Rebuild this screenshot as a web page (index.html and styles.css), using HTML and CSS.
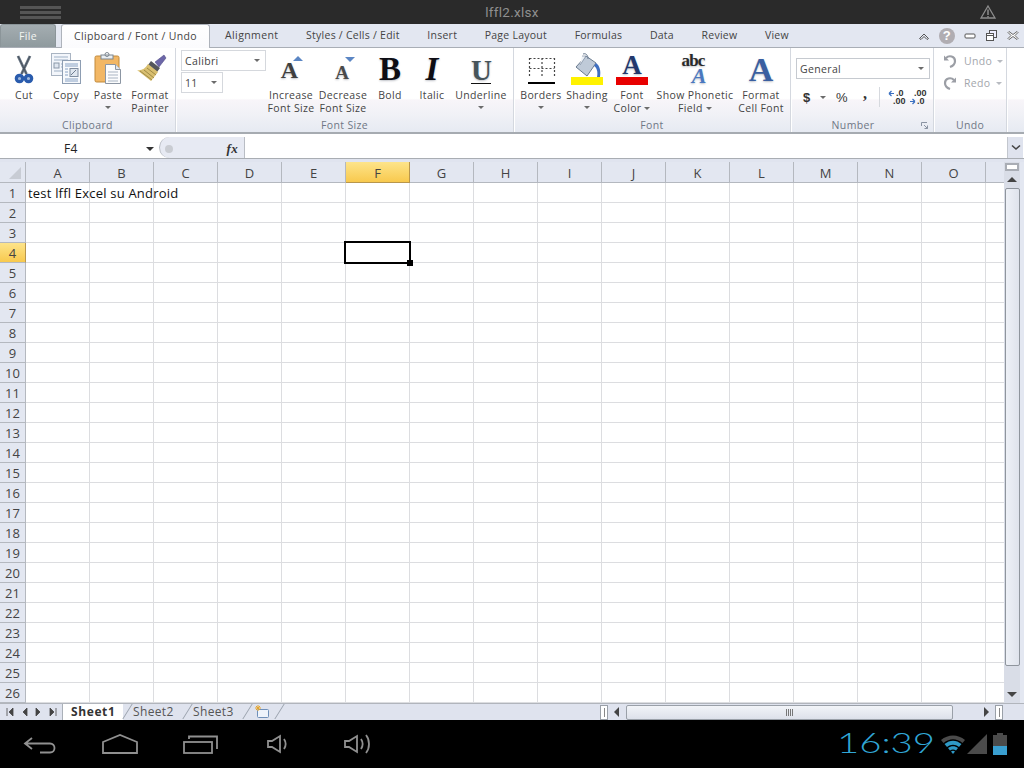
FILE: index.html
```html
<!DOCTYPE html>
<html lang="en">
<head>
<meta charset="utf-8">
<title>lffl2.xlsx</title>
<link rel="stylesheet" href="styles.css">
</head>
<body>
<div class="app">
  <header class="titlebar">
    <div class="grip"><i></i><i></i><i></i></div>
    <div class="doc-title">lffl2.xlsx</div>
    <svg class="warn" width="16" height="14" viewBox="0 0 16 14"><path d="M8 1 15 13H1Z" fill="none" stroke="#8d8d8d" stroke-width="1.3"/><path d="M8 4.500V10M8 11v1.500" stroke="#8d8d8d" stroke-width="1.500"/></svg>
  </header>

  <nav class="tabs">
    <div class="tab-file">File</div>
    <div class="tab tab-active">Clipboard / Font / Undo</div>
    <div class="tab">Alignment</div>
    <div class="tab">Styles / Cells / Edit</div>
    <div class="tab">Insert</div>
    <div class="tab">Page Layout</div>
    <div class="tab">Formulas</div>
    <div class="tab">Data</div>
    <div class="tab">Review</div>
    <div class="tab">View</div>
    <div class="win-ctrls">
      <svg width="12" height="10" viewBox="0 0 12 10"><path d="M1.500 7.500 6 3l4.500 4.500-1.500 1L6 5.500l-3 3Z" fill="none" stroke="#555" stroke-width="1"/></svg>
      <span class="help">?</span>
      <svg width="12" height="8" viewBox="0 0 12 8"><rect x="1" y="2" width="10" height="4" rx="1" fill="#fff" stroke="#555"/></svg>
      <svg width="13" height="13" viewBox="0 0 13 13"><rect x="4.500" y="1.500" width="7" height="7" fill="#eef" stroke="#555"/><rect x="1.500" y="4.500" width="7" height="7" fill="#fff" stroke="#555"/><path d="M2 6.500h6" stroke="#555"/></svg>
      <svg width="12" height="11" viewBox="0 0 12 11"><path d="M2 1.500 6 4.500l4-3 1 1-3 3 3 3-1 1-4-3-4 3-1-1 3-3-3-3Z" fill="#fff" stroke="#666"/></svg>
    </div>
  </nav>

  <section class="ribbon">
    <div class="group g-clip">
      <div class="group-body">
        <div class="btn w42">
          <svg class="ico" width="32" height="34" viewBox="0 0 32 34">
            <path d="M10 4 18.500 22M22 4 13.500 22" stroke="#6b7785" stroke-width="2.800"/>
            <path d="M10 4 18.500 22M22 4 13.500 22" stroke="#3d4753" stroke-width=".8"/>
            <circle cx="11.500" cy="26.500" r="3.200" fill="#9db7dc" stroke="#2a5cad" stroke-width="3.200"/>
            <circle cx="20.500" cy="26.500" r="3.200" fill="#9db7dc" stroke="#2a5cad" stroke-width="3.200"/>
          </svg>
          <div class="lbl">Cut</div>
        </div>
        <div class="btn w42">
          <svg class="ico" width="34" height="34" viewBox="0 0 34 34">
            <rect x="2.500" y="1.500" width="19" height="22" fill="#f3f6fb" stroke="#a9b4c2"/>
            <path d="M5 5h14M5 8h14M12 12h7M12 15h7M5 19h14" stroke="#9fb1c6"/>
            <rect x="5" y="11" width="5" height="5" fill="#dfe6ef" stroke="#8a97a8"/>
            <rect x="13.500" y="8.500" width="18" height="23" fill="#f7f9fc" stroke="#8d9db2"/>
            <path d="M16 12h13M16 14h13M16 27h13M16 29h13" stroke="#88a2c4"/>
            <rect x="21" y="16.500" width="8" height="8" fill="#dfe6ef" stroke="#7f8da0"/>
            <path d="M22 23 27 18" stroke="#6f7d90"/>
            <path d="M16 17h3M16 20h3M16 23h3" stroke="#88a2c4"/>
          </svg>
          <div class="lbl">Copy</div>
        </div>
        <div class="btn w42">
          <svg class="ico" width="32" height="34" viewBox="0 0 32 34">
            <rect x="3" y="4" width="24" height="26" rx="1.500" fill="#f2b765" stroke="#c18a3c"/>
            <rect x="9" y="3" width="12" height="4" fill="#e9eef2" stroke="#7d8791"/>
            <circle cx="15" cy="2.500" r="2" fill="none" stroke="#7d8791"/>
            <path d="M13.500 12.500h10l5 5v14h-15Z" fill="#fbfcfd" stroke="#8c96a3"/>
            <path d="M23.500 12.500v5h5" fill="#e2e7ee" stroke="#8c96a3"/>
            <path d="M16 20h10M16 23h10M16 26h10M16 29h10" stroke="#a9b4c2"/>
          </svg>
          <div class="lbl">Paste</div>
          <i class="caret"></i>
        </div>
        <div class="btn w42">
          <svg class="ico" width="32" height="34" viewBox="0 0 32 34">
            <path d="M21 10 30 3l2 3-7 9Z" fill="#6c66a8" stroke="#47427d" stroke-width=".5"/>
            <path d="M17 9 26 16l-3 4-9-7Z" fill="#54565c"/>
            <path d="M14 12 24 20 17 29 3 18C7 19 11 17 14 12Z" fill="#d9bf70"/>
            <path d="M6 19 18 28M10 18l10 8M13 16l9 7" stroke="#9f8a46"/>
          </svg>
          <div class="lbl">Format<br>Painter</div>
        </div>
      </div>
      <div class="group-label">Clipboard</div>
    </div>

    <div class="group g-size">
      <div class="group-body">
        <div class="combos">
          <div class="combo c-font"><span>Calibri</span><i class="caret"></i></div>
          <div class="combo c-num"><span>11</span><i class="caret"></i></div>
        </div>
        <div class="btn w-inc">
          <div class="gl gl-inc"><span>A</span><i class="tri tri-up"></i></div>
          <div class="lbl">Increase<br>Font Size</div>
        </div>
        <div class="btn w-dec">
          <div class="gl gl-dec"><span>A</span><i class="tri tri-down"></i></div>
          <div class="lbl">Decrease<br>Font Size</div>
        </div>
        <div class="btn w-bold">
          <div class="gl gl-b">B</div>
          <div class="lbl">Bold</div>
        </div>
        <div class="btn w-ital">
          <div class="gl gl-i">I</div>
          <div class="lbl">Italic</div>
        </div>
        <div class="btn w-und">
          <div class="gl gl-u"><span>U</span></div>
          <div class="lbl">Underline</div>
          <i class="caret"></i>
        </div>
      </div>
      <div class="group-label">Font Size</div>
    </div>

    <div class="group g-font">
      <div class="group-body">
        <div class="btn w-bor">
          <svg class="ico" width="30" height="34" viewBox="0 0 30 34">
            <path d="M3.500 6.500h25M3.500 16.500h25M3.500 6v20M16 6v20M28.500 6v20" stroke="#444" stroke-width="1.200" stroke-dasharray="2 2" fill="none"/>
            <path d="M2 31h27" stroke="#000" stroke-width="2"/>
          </svg>
          <div class="lbl">Borders</div>
          <i class="caret"></i>
        </div>
        <div class="btn w-sha">
          <svg class="ico" width="34" height="34" viewBox="0 0 34 34">
            <path d="M16 4 6 15l11 9 9-13Z" fill="#bfcad8" stroke="#6a7b90"/>
            <path d="M10 13 16 4l-4 0" fill="#eef2f7" stroke="#6a7b90" stroke-width=".6"/>
            <path d="M26 11c4 3 5 8 4 14h-3c1-5 0-9-3-11Z" fill="#3f6fc0"/>
            <path d="M13 2c3-1 5 1 5 5" fill="none" stroke="#6a7b90"/>
            <rect x="1" y="25" width="32" height="8" fill="#fff200"/>
          </svg>
          <div class="lbl">Shading</div>
          <i class="caret"></i>
        </div>
        <div class="btn w-col">
          <div class="gl gl-col"><span>A</span><div class="bar"></div></div>
          <div class="lbl">Font<br><span class="cap-inline">Color<i class="caret"></i></span></div>
        </div>
        <div class="btn w-pho">
          <div class="gl gl-pho"><span class="g-abc">abc</span><span class="g-aph">A</span></div>
          <div class="lbl">Show Phonetic<br><span class="cap-inline">Field<i class="caret"></i></span></div>
        </div>
        <div class="btn w-cel">
          <div class="gl gl-cel">A</div>
          <div class="lbl">Format<br>Cell Font</div>
        </div>
      </div>
      <div class="group-label">Font</div>
    </div>

    <div class="group g-num">
      <div class="group-body col">
        <div class="combo c-gen"><span>General</span><i class="caret"></i></div>
        <div class="num-row">
          <span class="n-sym n-d">$</span><i class="caret"></i>
          <span class="n-sym n-p">%</span>
          <span class="n-sym n-c">,</span>
          <span class="n-sep"></span>
          <div class="dec"><svg width="7" height="7" viewBox="0 0 7 7"><path d="M1 3.500h5M1 3.500l2.500-2.500M1 3.500 3.500 6" stroke="#3a6fc0" stroke-width="1.200" fill="none"/></svg><span class="d1">.0</span><span class="d2">.00</span></div>
          <div class="dec dec2"><span class="d3">.00</span><span class="d4">.0</span><svg width="7" height="7" viewBox="0 0 7 7"><path d="M1 3.500h5M6 3.500 3.500 1M6 3.500 3.500 6" stroke="#3a6fc0" stroke-width="1.200" fill="none"/></svg></div>
        </div>
      </div>
      <div class="group-label launch-row"><span>Number</span>
        <svg class="launcher" width="7" height="7" viewBox="0 0 7 7"><path d="M.5 4V.5H6M3 3 6.500 6.500M6.500 3.500v3h-3" fill="none" stroke="#8b94a3"/></svg>
      </div>
    </div>

    <div class="group g-undo">
      <div class="group-body col undo-col">
        <div class="undo-item">
          <svg width="14" height="14" viewBox="0 0 14 14"><path d="M1 1.500v5h5Z" fill="#9b9ea5"/><path d="M3 4c3-3 9-2 9 3 0 3-2 5-5 6" fill="none" stroke="#9b9ea5" stroke-width="2.200"/></svg>
          <span>Undo</span><i class="caret pale"></i>
        </div>
        <div class="undo-item">
          <svg width="14" height="14" viewBox="0 0 14 14"><path d="M13 1.500v5H8Z" fill="#9b9ea5"/><path d="M11 4C8 1 2 2 2 7c0 3 2 5 5 6" fill="none" stroke="#9b9ea5" stroke-width="2.200"/></svg>
          <span>Redo</span><i class="caret pale"></i>
        </div>
      </div>
      <div class="group-label">Undo</div>
    </div>
    <div class="ribbon-rest"></div>
  </section>

  <div class="formula">
    <div class="namebox"><span>F4</span><i class="caret dark"></i></div>
    <div class="pill"><i class="pill-dot"></i><span class="fx">fx</span></div>
    <div class="f-input"></div>
    <div class="f-drop"><svg width="10" height="7" viewBox="0 0 10 7"><path d="M1 1.500 5 5l4-3.500" fill="none" stroke="#444" stroke-width="1.600"/></svg></div>
  </div>
  <div class="band"></div>

  <div class="sheet-area">
    <div class="grid-wrap">
      <table class="grid">
        <thead>
          <tr><th class="corner"><i></i></th><th>A</th><th>B</th><th>C</th><th>D</th><th>E</th><th class="sel">F</th><th>G</th><th>H</th><th>I</th><th>J</th><th>K</th><th>L</th><th>M</th><th>N</th><th>O</th><th class="last"></th></tr>
        </thead>
        <tbody>
          <tr><th>1</th><td class="text">test lffl Excel su Android</td><td></td><td></td><td></td><td></td><td></td><td></td><td></td><td></td><td></td><td></td><td></td><td></td><td></td><td></td><td class="last"></td></tr>
          <tr><th>2</th><td></td><td></td><td></td><td></td><td></td><td></td><td></td><td></td><td></td><td></td><td></td><td></td><td></td><td></td><td></td><td class="last"></td></tr>
          <tr><th>3</th><td></td><td></td><td></td><td></td><td></td><td></td><td></td><td></td><td></td><td></td><td></td><td></td><td></td><td></td><td></td><td class="last"></td></tr>
          <tr><th class="sel">4</th><td></td><td></td><td></td><td></td><td></td><td class="cursor"><span class="cursor-box"></span></td><td></td><td></td><td></td><td></td><td></td><td></td><td></td><td></td><td></td><td class="last"></td></tr>
          <tr><th>5</th><td></td><td></td><td></td><td></td><td></td><td></td><td></td><td></td><td></td><td></td><td></td><td></td><td></td><td></td><td></td><td class="last"></td></tr>
          <tr><th>6</th><td></td><td></td><td></td><td></td><td></td><td></td><td></td><td></td><td></td><td></td><td></td><td></td><td></td><td></td><td></td><td class="last"></td></tr>
          <tr><th>7</th><td></td><td></td><td></td><td></td><td></td><td></td><td></td><td></td><td></td><td></td><td></td><td></td><td></td><td></td><td></td><td class="last"></td></tr>
          <tr><th>8</th><td></td><td></td><td></td><td></td><td></td><td></td><td></td><td></td><td></td><td></td><td></td><td></td><td></td><td></td><td></td><td class="last"></td></tr>
          <tr><th>9</th><td></td><td></td><td></td><td></td><td></td><td></td><td></td><td></td><td></td><td></td><td></td><td></td><td></td><td></td><td></td><td class="last"></td></tr>
          <tr><th>10</th><td></td><td></td><td></td><td></td><td></td><td></td><td></td><td></td><td></td><td></td><td></td><td></td><td></td><td></td><td></td><td class="last"></td></tr>
          <tr><th>11</th><td></td><td></td><td></td><td></td><td></td><td></td><td></td><td></td><td></td><td></td><td></td><td></td><td></td><td></td><td></td><td class="last"></td></tr>
          <tr><th>12</th><td></td><td></td><td></td><td></td><td></td><td></td><td></td><td></td><td></td><td></td><td></td><td></td><td></td><td></td><td></td><td class="last"></td></tr>
          <tr><th>13</th><td></td><td></td><td></td><td></td><td></td><td></td><td></td><td></td><td></td><td></td><td></td><td></td><td></td><td></td><td></td><td class="last"></td></tr>
          <tr><th>14</th><td></td><td></td><td></td><td></td><td></td><td></td><td></td><td></td><td></td><td></td><td></td><td></td><td></td><td></td><td></td><td class="last"></td></tr>
          <tr><th>15</th><td></td><td></td><td></td><td></td><td></td><td></td><td></td><td></td><td></td><td></td><td></td><td></td><td></td><td></td><td></td><td class="last"></td></tr>
          <tr><th>16</th><td></td><td></td><td></td><td></td><td></td><td></td><td></td><td></td><td></td><td></td><td></td><td></td><td></td><td></td><td></td><td class="last"></td></tr>
          <tr><th>17</th><td></td><td></td><td></td><td></td><td></td><td></td><td></td><td></td><td></td><td></td><td></td><td></td><td></td><td></td><td></td><td class="last"></td></tr>
          <tr><th>18</th><td></td><td></td><td></td><td></td><td></td><td></td><td></td><td></td><td></td><td></td><td></td><td></td><td></td><td></td><td></td><td class="last"></td></tr>
          <tr><th>19</th><td></td><td></td><td></td><td></td><td></td><td></td><td></td><td></td><td></td><td></td><td></td><td></td><td></td><td></td><td></td><td class="last"></td></tr>
          <tr><th>20</th><td></td><td></td><td></td><td></td><td></td><td></td><td></td><td></td><td></td><td></td><td></td><td></td><td></td><td></td><td></td><td class="last"></td></tr>
          <tr><th>21</th><td></td><td></td><td></td><td></td><td></td><td></td><td></td><td></td><td></td><td></td><td></td><td></td><td></td><td></td><td></td><td class="last"></td></tr>
          <tr><th>22</th><td></td><td></td><td></td><td></td><td></td><td></td><td></td><td></td><td></td><td></td><td></td><td></td><td></td><td></td><td></td><td class="last"></td></tr>
          <tr><th>23</th><td></td><td></td><td></td><td></td><td></td><td></td><td></td><td></td><td></td><td></td><td></td><td></td><td></td><td></td><td></td><td class="last"></td></tr>
          <tr><th>24</th><td></td><td></td><td></td><td></td><td></td><td></td><td></td><td></td><td></td><td></td><td></td><td></td><td></td><td></td><td></td><td class="last"></td></tr>
          <tr><th>25</th><td></td><td></td><td></td><td></td><td></td><td></td><td></td><td></td><td></td><td></td><td></td><td></td><td></td><td></td><td></td><td class="last"></td></tr>
          <tr><th>26</th><td></td><td></td><td></td><td></td><td></td><td></td><td></td><td></td><td></td><td></td><td></td><td></td><td></td><td></td><td></td><td class="last"></td></tr>
        </tbody>
      </table>
    </div>
    <div class="vscroll">
      <div class="split-h"></div>
      <svg class="arr" width="14" height="8" viewBox="0 0 14 8"><path d="M2 7 7 2l5 5Z" fill="#444"/></svg>
      <div class="vthumb"></div>
      <svg class="arr" width="14" height="8" viewBox="0 0 14 8"><path d="M2 1 7 6l5-5Z" fill="#444"/></svg>
    </div>
    <div class="v-edge"></div>
  </div>

  <div class="sheetbar">
    <div class="nav">
      <svg width="62" height="14" viewBox="0 0 62 14"><path d="M7 3v8M13 3 9 7l4 4ZM27 3l-4 4 4 4ZM36 3l4 4-4 4ZM50 3l4 4-4 4ZM56 3v8" fill="#444" stroke="#444" stroke-width=".8"/></svg>
    </div>
    <div class="stab stab-on">Sheet1</div>
    <div class="stab">Sheet2</div>
    <div class="stab">Sheet3</div>
    <div class="stab stab-new">
      <svg width="16" height="14" viewBox="0 0 16 14"><rect x="3.500" y="4.500" width="11" height="8" rx="1" fill="#eef3fb" stroke="#6f8fb8"/><path d="M4 0v6M1 3h6M2 1l4 4M6 1 2 5" stroke="#e5a52c"/></svg>
    </div>
    <div class="h-spacer"></div>
    <div class="split-v"><i></i></div>
    <svg class="harr" width="10" height="12" viewBox="0 0 10 12"><path d="M7 1 2 6l5 5Z" fill="#444"/></svg>
    <div class="hthumb"><span class="grip-v"></span></div>
    <svg class="harr harr-r" width="10" height="12" viewBox="0 0 10 12"><path d="M3 1l5 5-5 5Z" fill="#444"/></svg>
    <div class="split-v"><i></i></div>
  </div>

  <footer class="sysbar">
    <div class="sys-nav">
      <svg class="n-back" width="34" height="18" viewBox="0 0 34 18"><path d="M9 2 2 7.500l7 5.500M2 7.500h25c6 0 6 9 0 9H17" fill="none" stroke="#909090" stroke-width="1.800"/></svg>
      <svg class="n-home" width="38" height="20" viewBox="0 0 38 20"><path d="M2 8 19 1l17 7v11H2Z" fill="none" stroke="#909090" stroke-width="1.800"/></svg>
      <svg class="n-rec" width="36" height="20" viewBox="0 0 36 20"><rect x="1" y="8" width="28" height="11" fill="none" stroke="#909090" stroke-width="1.800"/><path d="M6 5V2.500h28V15" fill="none" stroke="#909090" stroke-width="1.800"/></svg>
      <svg class="n-vol" width="22" height="20" viewBox="0 0 22 20"><path d="M1 7h4l8-5v16l-8-5H1Z" fill="none" stroke="#909090" stroke-width="1.800"/><path d="M17 5c2 3 2 7 0 10" fill="none" stroke="#909090" stroke-width="1.800"/></svg>
      <svg class="n-volp" width="28" height="24" viewBox="0 0 28 24"><path d="M1 9h4l8-5v16l-8-5H1Z" fill="none" stroke="#909090" stroke-width="1.800"/><path d="M17 7c2 3 2 7 0 10M22 3c4 5 4 13 0 18" fill="none" stroke="#909090" stroke-width="1.800"/></svg>
    </div>
    <div class="sys-status">
      <svg class="clock" width="100" height="24" viewBox="0 0 100 24"><text x="0" y="21" textLength="98" lengthAdjust="spacingAndGlyphs">16:39</text></svg>
      <svg class="s-wifi" width="26" height="20" viewBox="0 0 26 20">
        <path d="M1 5C8-1 18-1 25 5l-2.500 3C16 3 10 3 3.500 8Z" fill="#4b4b4b"/>
        <path d="M4.500 9C10 4.500 16 4.500 21.500 9l-2.500 3C15 9 11 9 7 12Z" fill="#2f9ac6"/>
        <path d="M8 13c3-2.500 7-2.500 10 0l-2 2.500c-2-1.500-4-1.500-6 0Z" fill="#2f9ac6"/>
        <path d="M11 16.500c1.300-1 2.700-1 4 0L13 19Z" fill="#2f9ac6"/>
      </svg>
      <svg class="s-sig" width="21" height="20" viewBox="0 0 21 20"><path d="M20 0v20H0Z" fill="#4b4b4b"/></svg>
      <svg class="s-bat" width="14" height="22" viewBox="0 0 14 22"><path d="M4 0h6v2h4v20H0V2h4Z" fill="#4b4b4b"/><rect y="13" width="14" height="9" fill="#3a9fd0"/></svg>
    </div>
  </footer>
</div>
</body>
</html>
```

FILE: styles.css
```css
* { box-sizing: border-box; }
html, body { margin: 0; padding: 0; }
body { width: 1024px; height: 768px; overflow: hidden; background: #fff; font-family: "Open Sans", "Liberation Sans", sans-serif; font-size: 10.500px; letter-spacing: .35px; color: #444; }
svg { overflow: visible; }
.app { display: flex; flex-direction: column; width: 1024px; height: 768px; }

.titlebar { height: 24px; flex: none; display: flex; align-items: center; position: relative; padding-left: 20px; background: #2a2a2a; }
.grip { display: flex; flex-direction: column; gap: 2px; width: 41px; }
.grip i { display: block; height: 3px; background: #555; }
.doc-title { position: absolute; left: 0; right: 0; text-align: center; font-family: Roboto, sans-serif; font-size: 13.500px; color: #8f8f8f; letter-spacing: .3px; }
.warn { margin-left: auto; margin-right: 28px; }

.tabs { height: 24px; flex: none; display: flex; background: #e3e7f1; border-bottom: 1px solid #a9aeb6; line-height: 23px; }
.tab-file { width: 56px; height: 23px; text-align: center; color: #f2f5f2; background: linear-gradient(#a4adb1, #8f9a9e); border: 1px solid #8b9599; border-bottom: none; border-radius: 3px 3px 0 0; }
.tab { padding: 0 13.800px; white-space: nowrap; letter-spacing: .25px; }
.tab:nth-child(3) { padding-left: 15px; letter-spacing: .4px; }
.tab-active { margin-left: 5px; width: 149px; padding: 0; text-align: center; height: 24px; letter-spacing: .35px; background: linear-gradient(#fff, #fbfbfd); border: 1px solid #aeb3bb; border-bottom: none; border-radius: 3px 3px 0 0; }
.win-ctrls { margin-left: auto; width: 110px; display: flex; align-items: center; justify-content: space-between; padding: 0 5px 0 4px; height: 23px; }
.help { width: 16px; height: 16px; border-radius: 50%; background: #b0adb2; color: #fff; font: bold 13px/16px "Liberation Sans", sans-serif; text-align: center; }

.ribbon { height: 86px; flex: none; display: flex; border-bottom: 2px solid #a6abb1; background: linear-gradient(#fff 0, #fff 60%, #f8f5f9 62%, #f0f1f6 80%, #e6eaf2 100%); }
.group { display: flex; flex-direction: column; border-right: 1px solid #d4d8df; box-shadow: 1px 0 0 #fff; }
.group-body { height: 71px; flex: none; display: flex; }
.group-body.col { flex-direction: column; }
.group-label { height: 13px; line-height: 13px; text-align: center; color: #6f7785; }
.g-clip { width: 176px; }
.g-clip .group-body { padding-left: 3px; }
.g-size { width: 338px; }
.g-size .group-body { padding-left: 5px; }
.g-font { width: 277px; }
.g-font .group-body { padding-left: 5px; }
.g-num { width: 143px; }
.g-num .group-body { padding-left: 5px; }
.g-undo { width: 73px; }
.ribbon-rest { flex: 1; }

.btn { display: flex; flex-direction: column; align-items: center; text-align: center; line-height: 13px; white-space: nowrap; }
.ico { height: 34px; margin-top: 4px; flex: none; }
.lbl { margin-top: 3px; }
.w42 { width: 42px; }
.w-inc { width: 48px; margin-left: 1px; }
.w-dec { width: 48px; margin-left: 4px; }
.w-bold { width: 42px; margin-left: 2px; }
.w-ital { width: 42px; }
.w-und { width: 54px; margin-left: 1px; }
.w-bor { width: 44px; margin-left: 0; }
.w-sha { width: 48px; }
.w-col { width: 42px; }
.w-pho { width: 84px; }
.w-cel { width: 48px; }

.gl { position: relative; width: 100%; height: 34px; margin-top: 4px; flex: none; display: block; text-align: center; font-family: "Liberation Serif", serif; font-weight: bold; letter-spacing: 0; color: #0d0d14; text-shadow: 0 1px 2px rgba(40, 50, 70, .3); }
.gl > span { display: block; }
.gl-inc { padding: 6px 3px 0 0; font-size: 24px; line-height: 24px; color: #3f3f3f; }
.gl-dec { padding: 11px 2px 0 0; font-size: 19px; line-height: 19px; color: #4a4a4a; }
.gl-b { padding-top: 1px; font-size: 33px; line-height: 33px; }
.gl-i { padding-top: 1px; font-size: 33px; line-height: 33px; font-style: italic; }
.gl-u { padding-top: 4px; font-size: 29px; line-height: 29px; color: #46545a; }
.gl-u span { width: 20px; height: 27px; margin: 0 auto; border-bottom: 1px solid #111; box-sizing: content-box; padding-bottom: 0; }
.gl-col { padding-top: 2px; font-size: 27px; line-height: 23px; color: #22386d; }
.gl-col .bar { width: 32px; height: 8px; margin: 0 auto; background: #e80000; }
.gl-pho .g-abc { padding-top: 1px; font-size: 17px; line-height: 15px; letter-spacing: -.8px; color: #2a2a2a; margin-right: 4px; }
.gl-pho .g-aph { font-size: 22px; line-height: 16px; font-style: italic; color: #4a78c0; margin-left: 8px; }
.gl-cel { padding-top: 1px; font-size: 34px; line-height: 33px; color: #3a5fa0; }
.tri { position: absolute; width: 0; height: 0; border-left: 5px solid transparent; border-right: 5px solid transparent; }
.tri-up { left: 26px; top: 4px; border-bottom: 5px solid #5b86c4; }
.tri-down { left: 26px; top: 5px; border-top: 5px solid #5b86c4; }

.caret { display: inline-block; width: 0; height: 0; border-left: 3px solid transparent; border-right: 3px solid transparent; border-top: 3px solid #6b6b6b; }
.btn > .caret { margin-top: 4px; }
.cap-inline { display: inline-flex; align-items: center; gap: 3px; }
.caret.pale { border-top-color: #b8bbc1; margin-left: 5px; }
.caret.dark { border-left-width: 4px; border-right-width: 4px; border-top: 4px solid #333; }

.combos { display: flex; flex-direction: column; gap: 1px; width: 85px; margin-top: 2px; }
.combo { display: flex; align-items: center; justify-content: space-between; height: 21px; padding: 0 5px 0 3px; background: #fff; border: 1px solid #d5d8dd; }
.c-font { width: 85px; }
.c-num { width: 42px; }
.c-gen { width: 134px; margin-top: 10px; border-color: #c6cad0; flex: none; }

.num-row { display: flex; align-items: center; height: 24px; margin-top: 6px; padding-left: 7px; }
.n-sym { font-family: "Liberation Sans", sans-serif; color: #333; }
.n-d { font-size: 13px; font-weight: bold; width: 17px; }
.n-p { font-size: 13px; margin-left: 10px; width: 17px; }
.n-c { font-family: "Liberation Serif", serif; font-size: 16px; font-weight: bold; margin-left: 10px; width: 14px; line-height: 12px; padding-bottom: 6px; }
.n-sep { width: 1px; height: 20px; background: #d6d9de; margin: 0 8px 0 2px; }
.dec { position: relative; width: 17px; height: 16px; margin-right: 4px; font: bold 9px/8px "Liberation Sans", sans-serif; color: #333; letter-spacing: 0; }
.dec svg { position: absolute; left: 0; top: 1px; }
.dec2 svg { top: 9px; }
.dec span { position: absolute; white-space: nowrap; }
.d1 { left: 8px; top: 0; }
.d2 { left: 5px; top: 8px; }
.d3 { left: 5px; top: 0; }
.d4 { left: 8px; top: 8px; }
.launch-row { position: relative; padding-right: 18px; }
.launcher { position: absolute; right: 5px; top: 3px; }

.undo-col { padding: 5px 0 0 9px; gap: 6px; }
.undo-item { display: flex; align-items: center; height: 16px; color: #a3a6ac; }
.undo-item span { margin-left: 7px; }

.formula { height: 25px; flex: none; display: flex; padding-top: 3px; background: #fff; border-bottom: 1px solid #a9adb3; }
.namebox { width: 159px; display: flex; align-items: center; padding: 2px 5px 0 64px; justify-content: space-between; font-size: 12px; color: #222; }
.pill { width: 86px; display: flex; align-items: center; justify-content: space-between; padding: 2px 6px 0 5px; background: #e7eaf3; border: 1px solid #b9bdc4; border-width: 0 1px 0 1px; border-radius: 11px 0 0 11px; }
.pill-dot { width: 8px; height: 8px; border-radius: 50%; background: #c9ccd2; }
.fx { font: italic bold 13px "Liberation Serif", serif; color: #333; }
.f-input { flex: 1; }
.f-drop { width: 16px; margin-right: 1px; display: flex; align-items: center; justify-content: center; background: #dfe3ee; border-left: 1px solid #c3c7ce; }
.band { height: 3px; flex: none; background: #e0e4ef; }

.sheet-area { height: 541px; flex: none; display: flex; overflow: hidden; }
.grid-wrap { width: 1004px; overflow: hidden; flex: none; }
.grid { border-collapse: separate; border-spacing: 0; table-layout: fixed; width: 1004px; font-size: 13px; letter-spacing: 0; }
.grid th, .grid td { padding: 0; width: 64px; height: 20px; border-right: 1px solid #dcdde0; border-bottom: 1px solid #dcdde0; }
.grid th { padding-top: 2px; font-weight: normal; font-size: 13px; color: #444; background: #e3e7f1; border-color: #b4b8bf; text-align: center; line-height: 17px; }
.grid thead th { height: 21px; line-height: 18px; }
.grid th:first-child { width: 26px; }
.grid .last { width: 18px; border-right: none; }
.grid tbody th:first-child { border-bottom-color: #b4b8bf; }
.grid th.sel { background: linear-gradient(#fde48a, #f8c94e); border-color: #b8964c; }
.grid .corner { position: relative; padding: 0; }
.corner i { position: absolute; right: 4px; bottom: 3px; width: 0; height: 0; border-left: 12px solid transparent; border-bottom: 12px solid #c8ccd4; }
.grid .text { white-space: nowrap; overflow: visible; color: #111; font-size: 13px; letter-spacing: .2px; line-height: 17px; padding: 2px 0 0 2px; }
.cursor { position: relative; }
.cursor-box { position: absolute; left: -2px; top: -2px; right: -2px; bottom: -2px; border: 2px solid #000; }
.cursor-box::after { content: ""; position: absolute; right: -4px; bottom: -4px; width: 6px; height: 6px; background: #000; }

.vscroll { width: 16px; flex: none; display: flex; flex-direction: column; align-items: center; background: #d9dde7; }
.split-h { width: 14px; height: 8px; margin-top: 1px; flex: none; background: #fff; border: 2px solid #a9adb5; }
.arr { margin-top: 4px; flex: none; }
.vthumb { width: 15px; height: 478px; margin-top: 5px; flex: none; background: linear-gradient(90deg, #eef1f7, #dfe3ec); border: 1px solid #8f959d; border-radius: 2px; }
.vscroll .vthumb + .arr { margin-top: 25px; }
.v-edge { flex: 1; background: #e3e7f1; }

.sheetbar { height: 17px; flex: none; display: flex; align-items: center; background: #dfe3ee; border-top: 1px solid #b1b5bc; font-size: 12px; }
.nav { width: 63px; height: 16px; flex: none; display: flex; align-items: center; border-right: 1px solid #aab0b8; }
.stab { position: relative; width: 60px; height: 16px; padding-left: 10px; line-height: 15px; color: #555; flex: none; }
.stab::after { content: ""; position: absolute; top: 0; right: -5px; bottom: 1px; border-right: 1px solid #9aa2ad; transform: skewX(-32deg); }
.stab-on { padding-left: 8px; font-weight: bold; letter-spacing: .6px; background: #fff; color: #333; }
.stab-new { width: 32px; padding-left: 11px; display: flex; align-items: center; }
.h-spacer { flex: 1; }
.split-v { width: 8px; height: 15px; background: #fff; border: 1px solid #9aa0a8; display: flex; justify-content: center; flex: none; }
.split-v i { width: 1px; height: 9px; margin-top: 2px; background: #888; }
.harr { margin-left: 4px; flex: none; }
.harr-r { margin-left: 28px; margin-right: 4px; }
.hthumb { width: 327px; height: 15px; margin-left: 4px; flex: none; display: flex; align-items: center; justify-content: center; background: linear-gradient(#f2f4f8, #dde1ea); border: 1px solid #9aa0a8; border-radius: 2px; }
.grip-v { width: 7px; height: 7px; background: repeating-linear-gradient(90deg, #777 0 1px, transparent 1px 2px); }
.sheetbar > .split-v:last-child { margin-right: 21px; }

.sysbar { height: 48px; flex: none; display: flex; justify-content: space-between; background: #000; }
.sys-nav { display: flex; align-items: center; padding-left: 23px; }
.n-back { margin-top: 2px; }
.n-home { margin-left: 44px; }
.n-rec { margin-left: 44px; }
.n-vol { margin-left: 48px; }
.n-volp { margin-left: 55px; }
.sys-status { display: flex; align-items: center; padding-right: 17px; }
.clock text { font-family: Lato, sans-serif; font-weight: 300; font-size: 27px; letter-spacing: 0; fill: #31a6d6; }
.s-wifi { margin-left: 3px; margin-top: 1px; }
.s-sig { margin-left: 1px; }
.s-bat { margin-left: 5px; }
```
